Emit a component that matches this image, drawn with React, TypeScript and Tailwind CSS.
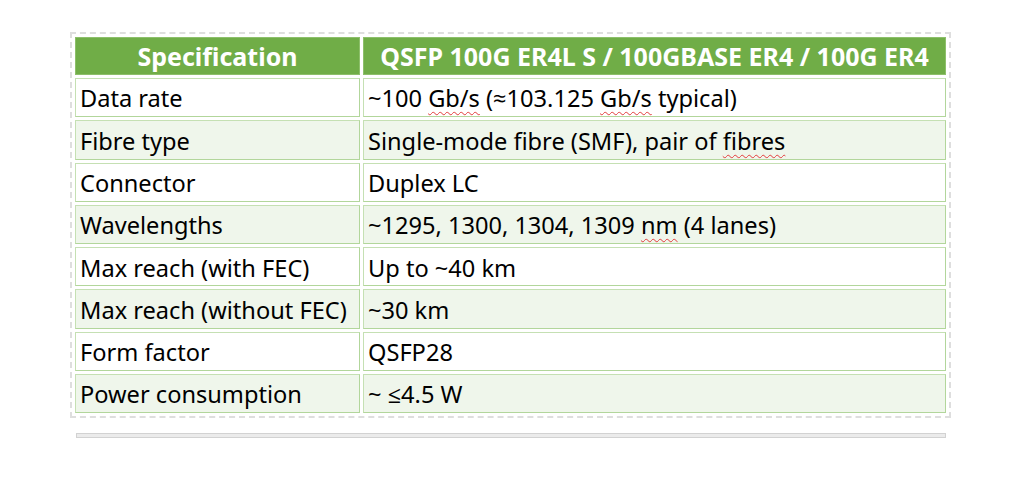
const ROWS: { spec: string; value: React.ReactNode }[] = [
  {
    spec: "Data rate",
    value: (
      <>
        ~100 <Squiggle>Gb/s</Squiggle> (≈103.125 <Squiggle>Gb/s</Squiggle> typical)
      </>
    ),
  },
  {
    spec: "Fibre type",
    value: (
      <>
        Single-mode fibre (SMF), pair of <Squiggle>fibres</Squiggle>
      </>
    ),
  },
  { spec: "Connector", value: "Duplex LC" },
  {
    spec: "Wavelengths",
    value: (
      <>
        ~1295, 1300, 1304, 1309 <Squiggle>nm</Squiggle> (4 lanes)
      </>
    ),
  },
  { spec: "Max reach (with FEC)", value: "Up to ~40 km" },
  { spec: "Max reach (without FEC)", value: "~30 km" },
  { spec: "Form factor", value: "QSFP28" },
  { spec: "Power consumption", value: "~ ≤4.5 W" },
];

// spell-check style red wavy underline
function Squiggle({ children }: { children: React.ReactNode }) {
  return (
    <span className="underline decoration-wavy decoration-[#e23b3b] decoration-1 underline-offset-[4px]">
      {children}
    </span>
  );
}

export default function App() {
  return (
    <div
      className="w-[1024px] h-[484px] bg-white pt-[32px] pl-[70px]"
      style={{ fontFamily: '"Noto Sans", "Open Sans", sans-serif' }}
    >
      <div className="w-[881px] border-2 border-dashed border-[#dedede]">
        <table className="border-separate border-spacing-x-[3px] border-spacing-y-[3px] w-full text-[23.6px] text-black">
          <thead>
            <tr>
              <th className="h-[38px] w-[285px] bg-[#70ad47] border border-[#8dbf6a] text-white font-bold text-[25px] leading-none text-center">
                Specification
              </th>
              <th className="h-[38px] bg-[#70ad47] border border-[#8dbf6a] text-white font-bold text-[25px] leading-none text-center whitespace-nowrap">
                QSFP 100G ER4L S / 100GBASE ER4 / 100G ER4
              </th>
            </tr>
          </thead>
          <tbody>
            {ROWS.map((row, i) => {
              const bg = i % 2 === 1 ? "bg-[#eff6eb]" : "bg-white";
              return (
                <tr key={row.spec}>
                  <td
                    className={`h-[39.3px] pl-[4px] pr-[4px] pt-[3px] pb-0 border border-[#c5e0b3] border-r-[#b2d69b] border-b-[#b2d69b] leading-none whitespace-nowrap ${bg}`}
                  >
                    {row.spec}
                  </td>
                  <td
                    className={`h-[39.3px] pl-[4px] pr-[4px] pt-[3px] pb-0 border border-[#c5e0b3] border-r-[#b2d69b] border-b-[#b2d69b] leading-none whitespace-nowrap ${bg}`}
                  >
                    {row.value}
                  </td>
                </tr>
              );
            })}
          </tbody>
        </table>
      </div>
      <div className="mt-[15px] ml-[6px] w-[870px] h-[5px] border border-[#d2d2d2] bg-[#ebebeb]" />
    </div>
  );
}
